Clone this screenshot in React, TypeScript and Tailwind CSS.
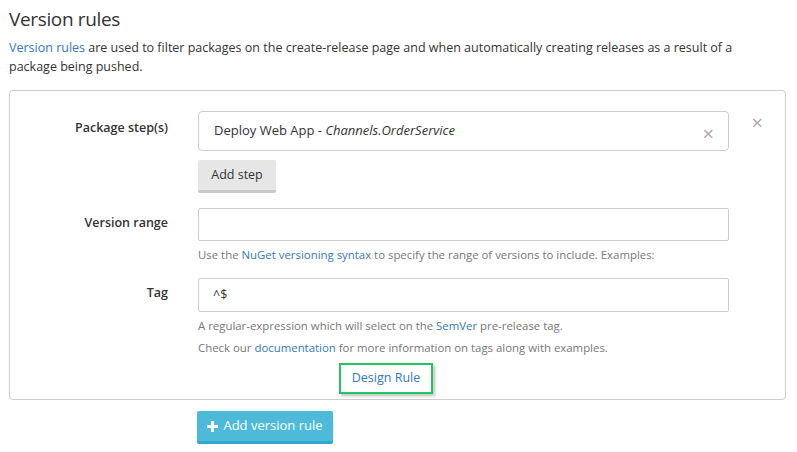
import React from "react";

const font = { fontFamily: '"Open Sans", "Noto Sans", sans-serif' };

export default function App() {
  return (
    <div className="w-[797px] h-[452px] bg-white text-[#333] overflow-hidden pl-[9px] pr-[11px] pt-[5px]" style={font}>
      <h1 className="text-[19px] leading-[28px] font-normal tracking-[-0.35px] text-[#333]">Version rules</h1>
      <p className="mt-[5px] text-[12.5px] leading-[19px] text-[#333] pr-[40px]">
        <span className="text-[#337ab7]">Version rules</span> are used to filter packages on the create-release page and when automatically creating releases as a result of a package being pushed.
      </p>
      <div className="mt-[14px] border border-[#ccc] rounded-[4px] h-[310px] pt-[20px] relative">
        <button className="absolute right-[22px] top-[22px] text-[#aaa] text-[20px] leading-none">×</button>
        {/* Package step row */}
        <div className="flex">
          <div className="w-[158px] text-right text-[12.5px] font-semibold pt-[8px]">Package step(s)</div>
          <div className="ml-[30px] w-[531px]">
            <div className="h-[40px] border border-[#ccc] rounded-[4px] flex items-center pl-[15px] pr-[14px] text-[13px]">
              <span className="flex-1">Deploy Web App - <i>Channels.OrderService</i></span>
              <span className="text-[#aaa] text-[20px] leading-none mt-[6px]">×</span>
            </div>
            <button className="mt-[9px] h-[33px] w-[78px] bg-[#e6e6e6] border-b-[3px] border-[#c8c8c8] rounded-[2px] text-[12.5px] text-[#333]">Add step</button>
          </div>
        </div>
        {/* Version range */}
        <div className="flex mt-[15px]">
          <div className="w-[158px] text-right text-[12.5px] font-semibold pt-[6px]">Version range</div>
          <div className="ml-[30px] w-[531px]">
            <div className="h-[33px] border border-[#ccc] rounded-[2px]"></div>
            <p className="mt-[5px] text-[11.4px] leading-[18px] text-[#777]">
              Use the <span className="text-[#337ab7]">NuGet versioning syntax</span> to specify the range of versions to include. Examples:
            </p>
          </div>
        </div>
        {/* Tag */}
        <div className="flex mt-[14px]">
          <div className="w-[158px] text-right text-[12.5px] font-semibold pt-[6px]">Tag</div>
          <div className="ml-[30px] w-[531px]">
            <div className="h-[34px] border border-[#ccc] rounded-[2px] flex items-center pl-[14px] text-[12.5px]">^$</div>
            <p className="mt-[3px] text-[11.4px] leading-[22px] text-[#777]">
              A regular-expression which will select on the <span className="text-[#337ab7]">SemVer</span> pre-release tag.
            </p>
            <p className="text-[11.4px] leading-[22px] text-[#777]">
              Check our <span className="text-[#337ab7]">documentation</span> for more information on tags along with examples.
            </p>
          </div>
        </div>
        <div className="flex mt-[4px] ml-[329px]">
          <div className="w-[94px] h-[31px] border-2 border-[#22c55e] shadow-[2px_2px_3px_rgba(0,0,0,0.25)] flex items-center justify-center text-[12.5px] text-[#337ab7]">Design Rule</div>
        </div>
      </div>
      <div className="ml-[188px] mt-[11px]">
        <button className="h-[33px] w-[136px] bg-[#4dbad9] border-b-[3px] border-[#2fa8cf] rounded-[2px] text-white text-[13px] flex items-center justify-center gap-[5px]">
          <svg width="11" height="11" viewBox="0 0 11 11"><path d="M4 0h3v4h4v3H7v4H4V7H0V4h4z" fill="white" /></svg>
          Add version rule
        </button>
      </div>
    </div>
  );
}
